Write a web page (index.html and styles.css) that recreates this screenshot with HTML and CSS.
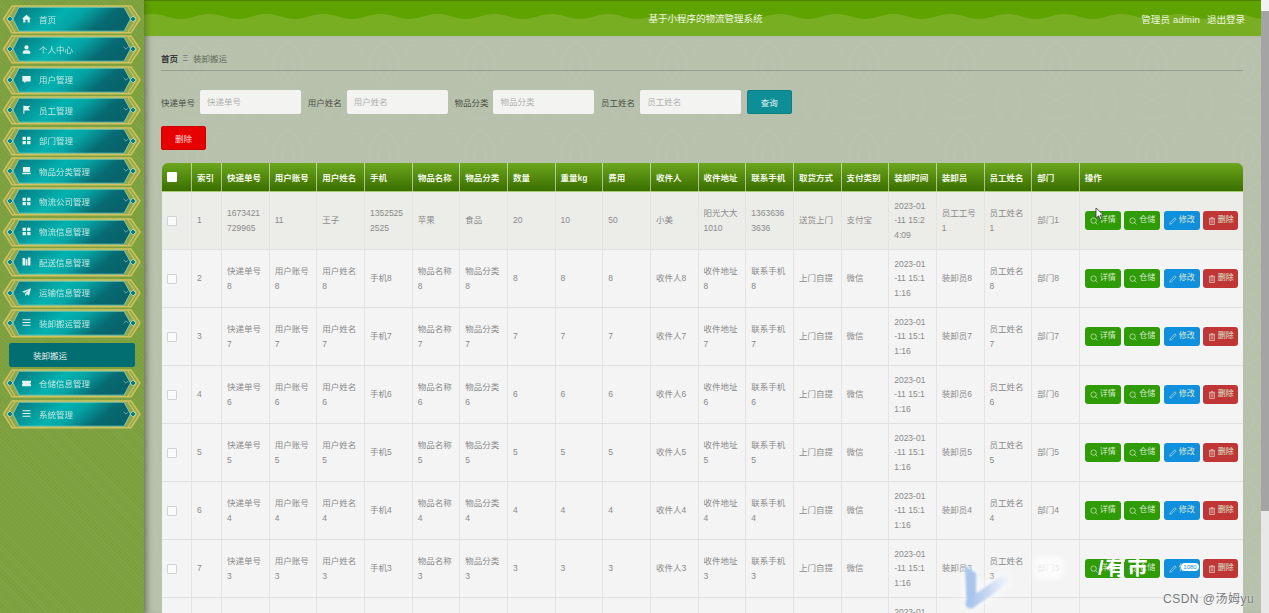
FILE: index.html
```html
<!DOCTYPE html>
<html>
<head>
	<meta charset="utf-8">
	<meta name="viewport" content="width=device-width, initial-scale=1">
	<title>基于小程序的物流管理系统</title>
	<link rel="stylesheet" href="styles.css">
</head>
<body>
<svg class="defs" aria-hidden="true">
	<defs>
		<linearGradient id="teal" x1="0" y1="0" x2="1" y2="0.25">
			<stop offset="0" stop-color="#07757c"/>
			<stop offset="0.16" stop-color="#068a8e"/>
			<stop offset="0.45" stop-color="#02b2b0"/>
			<stop offset="0.62" stop-color="#04a3a4"/>
			<stop offset="0.86" stop-color="#076a72"/>
			<stop offset="1" stop-color="#07646c"/>
		</linearGradient>
		<linearGradient id="wm-fade" x1="0" y1="0" x2="1" y2="0">
			<stop offset="0" stop-color="#a9c5ec"/>
			<stop offset="0.55" stop-color="#c9daf2"/>
			<stop offset="1" stop-color="#eef3fb"/>
		</linearGradient>
		<pattern id="wave-tile" x="-20" y="0" width="57" height="36" patternUnits="userSpaceOnUse">
			<path d="M0 18 C10 18 18 13 28.500 13 S47 18 57 18 V0 H0 Z" fill="#5fa300"/>
		</pattern>
		<symbol id="frame" viewBox="0 0 143 30">
			<path d="M3.500 15 L12 2 H131 L140 15 L131 28.700 H12 Z" fill="#8fa84c" stroke="#d2c360" stroke-width="1.400"/>
			<path d="M7 15 L15 3 M7 15 L15 28 M136.500 15 L128 3 M136.500 15 L128 28" stroke="#d2c360" stroke-width="1.200" fill="none"/>
			<path d="M19 3.200 H124 L130.500 15 L124 27.200 H19 L13 15 Z" fill="url(#teal)" stroke="#8fd3bc" stroke-width="0.800"/>
			<path d="M10 12 L13 15 L10 18 L7 15 Z M133 12 L136 15 L133 18 L130 15 Z" fill="#067f82" stroke="#c6e8c8" stroke-width="0.700"/>
		</symbol>
		<symbol id="i-home" viewBox="0 0 10 10"><path d="M5 .8 L10 5.300 H8.600 V9.400 H6.200 V6.400 H3.800 V9.400 H1.400 V5.300 H0 Z"/></symbol>
		<symbol id="i-user" viewBox="0 0 10 10"><circle cx="5" cy="2.700" r="2.300"/><path d="M.8 9.600 V7.800 C.8 6.400 2.200 5.800 5 5.800 S9.200 6.400 9.200 7.800 V9.600 Z"/></symbol>
		<symbol id="i-chat" viewBox="0 0 10 10"><path d="M.4 1 H9.600 V7.200 H4.600 L2.600 9.200 V7.200 H.4 Z"/></symbol>
		<symbol id="i-flag" viewBox="0 0 10 10"><path d="M1.500 .6 H2.700 V1.200 H9 L7 3.600 L9 6 H2.700 V9.600 H1.500 Z"/></symbol>
		<symbol id="i-grid" viewBox="0 0 10 10"><path d="M.6 .8 H4.300 V4.400 H.6 Z M5.700 .8 H9.400 V4.400 H5.700 Z M.6 5.600 H4.300 V9.200 H.6 Z M5.700 5.600 H9.400 V9.200 H5.700 Z"/></symbol>
		<symbol id="i-box" viewBox="0 0 10 10"><path d="M1 1 H9 V6.800 H1 Z M0 7.400 H10 L9.200 9.200 H.8 Z"/></symbol>
		<symbol id="i-book" viewBox="0 0 10 10"><path d="M.6 1 H3.400 V9.400 H.6 Z M4 2.400 H6 V9.400 H4 Z M6.600 .6 H9.400 V9.400 H6.600 Z"/></symbol>
		<symbol id="i-send" viewBox="0 0 10 10"><path d="M10 .4 L7.800 8.600 L5.200 6.800 L4 9.400 L3.400 6.200 L8 2.400 L2.400 5.400 L0 4.200 Z"/></symbol>
		<symbol id="i-list" viewBox="0 0 10 10"><path d="M.6 1.400 H9.400 V2.600 H.6 Z M.6 4.400 H9.400 V5.600 H.6 Z M.6 7.400 H9.400 V8.600 H.6 Z"/></symbol>
		<symbol id="i-ticket" viewBox="0 0 10 10"><path d="M0 2 H10 V3.800 L9 5 L10 6.200 V8 H0 V6.200 L1 5 L0 3.800 Z"/></symbol>
		<symbol id="i-search" viewBox="0 0 10 10"><circle cx="4.500" cy="4.500" r="3.400" fill="none" stroke="currentColor" stroke-width=".9"/><path d="M7 7 L9.300 9.300" stroke="currentColor" stroke-width=".9"/></symbol>
		<symbol id="i-edit" viewBox="0 0 10 10"><path d="M1 9 L1.600 6.800 L7.400 1 L9 2.600 L3.200 8.400 Z" fill="none" stroke="currentColor" stroke-width=".8"/></symbol>
		<symbol id="i-trash" viewBox="0 0 10 10"><path d="M2 2.600 H8 V9.400 H2 Z M1 1.600 H9 M3.800 .6 H6.200 M4 4 V8 M6 4 V8" fill="none" stroke="currentColor" stroke-width=".8"/></symbol>
		<symbol id="i-down" viewBox="0 0 10 6"><path d="M1 1 L5 5 L9 1" fill="none" stroke="currentColor" stroke-width="1"/></symbol>
		<symbol id="i-up" viewBox="0 0 10 6"><path d="M1 5 L5 1 L9 5" fill="none" stroke="currentColor" stroke-width="1"/></symbol>
	</defs>
</svg>

<aside class="sidebar">
	<a class="menu-item"><svg class="frame"><use href="#frame"/></svg><svg class="ico"><use href="#i-home"/></svg><span>首页</span></a>
	<a class="menu-item"><svg class="frame"><use href="#frame"/></svg><svg class="ico"><use href="#i-user"/></svg><span>个人中心</span><svg class="arrow"><use href="#i-down"/></svg></a>
	<a class="menu-item"><svg class="frame"><use href="#frame"/></svg><svg class="ico"><use href="#i-chat"/></svg><span>用户管理</span><svg class="arrow"><use href="#i-down"/></svg></a>
	<a class="menu-item"><svg class="frame"><use href="#frame"/></svg><svg class="ico"><use href="#i-flag"/></svg><span>员工管理</span><svg class="arrow"><use href="#i-down"/></svg></a>
	<a class="menu-item"><svg class="frame"><use href="#frame"/></svg><svg class="ico"><use href="#i-grid"/></svg><span>部门管理</span><svg class="arrow"><use href="#i-down"/></svg></a>
	<a class="menu-item"><svg class="frame"><use href="#frame"/></svg><svg class="ico"><use href="#i-box"/></svg><span>物品分类管理</span><svg class="arrow"><use href="#i-down"/></svg></a>
	<a class="menu-item"><svg class="frame"><use href="#frame"/></svg><svg class="ico"><use href="#i-grid"/></svg><span>物流公司管理</span><svg class="arrow"><use href="#i-down"/></svg></a>
	<a class="menu-item"><svg class="frame"><use href="#frame"/></svg><svg class="ico"><use href="#i-grid"/></svg><span>物流信息管理</span><svg class="arrow"><use href="#i-down"/></svg></a>
	<a class="menu-item"><svg class="frame"><use href="#frame"/></svg><svg class="ico"><use href="#i-book"/></svg><span>配送信息管理</span><svg class="arrow"><use href="#i-down"/></svg></a>
	<a class="menu-item"><svg class="frame"><use href="#frame"/></svg><svg class="ico"><use href="#i-send"/></svg><span>运输信息管理</span><svg class="arrow"><use href="#i-down"/></svg></a>
	<a class="menu-item"><svg class="frame"><use href="#frame"/></svg><svg class="ico"><use href="#i-list"/></svg><span>装卸搬运管理</span><svg class="arrow"><use href="#i-up"/></svg></a>
	<a class="sub-item">装卸搬运</a>
	<a class="menu-item"><svg class="frame"><use href="#frame"/></svg><svg class="ico"><use href="#i-ticket"/></svg><span>仓储信息管理</span><svg class="arrow"><use href="#i-down"/></svg></a>
	<a class="menu-item"><svg class="frame"><use href="#frame"/></svg><svg class="ico"><use href="#i-list"/></svg><span>系统管理</span><svg class="arrow"><use href="#i-down"/></svg></a>
</aside>

<div class="main">
	<header class="topbar">
		<svg class="wave" aria-hidden="true"><rect width="100%" height="100%" fill="url(#wave-tile)"/></svg>
		<div class="title">基于小程序的物流管理系统</div>
		<div class="user"><span class="who">管理员 admin</span><span>退出登录</span></div>
	</header>

	<div class="content">
		<div class="crumb"><b>首页</b><i>Ξ</i><span>装卸搬运</span></div>

		<form class="search">
			<label>快递单号</label><input placeholder="快递单号">
			<label>用户姓名</label><input placeholder="用户姓名">
			<label>物品分类</label><input placeholder="物品分类">
			<label>员工姓名</label><input placeholder="员工姓名">
			<button type="button" class="btn-query">查询</button>
		</form>

		<button type="button" class="btn-del">删除</button>

		<div class="table-wrap">
			<table class="grid">
				<colgroup>
					<col class="c-check"><col class="c-index">
					<col class="c-data"><col class="c-data"><col class="c-data"><col class="c-data"><col class="c-data"><col class="c-data">
					<col class="c-data"><col class="c-data"><col class="c-data"><col class="c-data"><col class="c-data"><col class="c-data">
					<col class="c-data"><col class="c-data"><col class="c-data"><col class="c-data"><col class="c-data"><col class="c-data">
					<col class="c-action">
				</colgroup>
				<thead>
					<tr>
						<th><input type="checkbox" class="check head"></th><th>索引</th><th>快递单号</th><th>用户账号</th><th>用户姓名</th><th>手机</th><th>物品名称</th><th>物品分类</th><th>数量</th><th>重量kg</th><th>费用</th><th>收件人</th><th>收件地址</th><th>联系手机</th><th>取货方式</th><th>支付类别</th><th>装卸时间</th><th>装卸员</th><th>员工姓名</th><th>部门</th><th>操作</th>
					</tr>
				</thead>
				<tbody>
					<tr class="hover">
						<td><input type="checkbox" class="check"></td><td>1</td><td>1673421729965</td><td>11</td><td>王子</td><td>13525252525</td><td>苹果</td><td>食品</td><td>20</td><td>10</td><td>50</td><td>小美</td><td>阳光大大1010</td><td>13636363636</td><td>送货上门</td><td>支付宝</td><td>2023-01<br>-11 15:2<br>4:09</td><td>员工工号1</td><td>员工姓名1</td><td>部门1</td>
						<td><div class="ops"><a class="op green"><svg><use href="#i-search"/></svg>详情</a><a class="op green"><svg><use href="#i-search"/></svg>仓储</a><a class="op blue"><svg><use href="#i-edit"/></svg>修改</a><a class="op red"><svg><use href="#i-trash"/></svg>删除</a></div></td>
					</tr>
					<tr>
						<td><input type="checkbox" class="check"></td><td>2</td><td>快递单号8</td><td>用户账号8</td><td>用户姓名8</td><td>手机8</td><td>物品名称8</td><td>物品分类8</td><td>8</td><td>8</td><td>8</td><td>收件人8</td><td>收件地址8</td><td>联系手机8</td><td>上门自提</td><td>微信</td><td>2023-01<br>-11 15:1<br>1:16</td><td>装卸员8</td><td>员工姓名8</td><td>部门8</td>
						<td><div class="ops"><a class="op green"><svg><use href="#i-search"/></svg>详情</a><a class="op green"><svg><use href="#i-search"/></svg>仓储</a><a class="op blue"><svg><use href="#i-edit"/></svg>修改</a><a class="op red"><svg><use href="#i-trash"/></svg>删除</a></div></td>
					</tr>
					<tr>
						<td><input type="checkbox" class="check"></td><td>3</td><td>快递单号7</td><td>用户账号7</td><td>用户姓名7</td><td>手机7</td><td>物品名称7</td><td>物品分类7</td><td>7</td><td>7</td><td>7</td><td>收件人7</td><td>收件地址7</td><td>联系手机7</td><td>上门自提</td><td>微信</td><td>2023-01<br>-11 15:1<br>1:16</td><td>装卸员7</td><td>员工姓名7</td><td>部门7</td>
						<td><div class="ops"><a class="op green"><svg><use href="#i-search"/></svg>详情</a><a class="op green"><svg><use href="#i-search"/></svg>仓储</a><a class="op blue"><svg><use href="#i-edit"/></svg>修改</a><a class="op red"><svg><use href="#i-trash"/></svg>删除</a></div></td>
					</tr>
					<tr>
						<td><input type="checkbox" class="check"></td><td>4</td><td>快递单号6</td><td>用户账号6</td><td>用户姓名6</td><td>手机6</td><td>物品名称6</td><td>物品分类6</td><td>6</td><td>6</td><td>6</td><td>收件人6</td><td>收件地址6</td><td>联系手机6</td><td>上门自提</td><td>微信</td><td>2023-01<br>-11 15:1<br>1:16</td><td>装卸员6</td><td>员工姓名6</td><td>部门6</td>
						<td><div class="ops"><a class="op green"><svg><use href="#i-search"/></svg>详情</a><a class="op green"><svg><use href="#i-search"/></svg>仓储</a><a class="op blue"><svg><use href="#i-edit"/></svg>修改</a><a class="op red"><svg><use href="#i-trash"/></svg>删除</a></div></td>
					</tr>
					<tr>
						<td><input type="checkbox" class="check"></td><td>5</td><td>快递单号5</td><td>用户账号5</td><td>用户姓名5</td><td>手机5</td><td>物品名称5</td><td>物品分类5</td><td>5</td><td>5</td><td>5</td><td>收件人5</td><td>收件地址5</td><td>联系手机5</td><td>上门自提</td><td>微信</td><td>2023-01<br>-11 15:1<br>1:16</td><td>装卸员5</td><td>员工姓名5</td><td>部门5</td>
						<td><div class="ops"><a class="op green"><svg><use href="#i-search"/></svg>详情</a><a class="op green"><svg><use href="#i-search"/></svg>仓储</a><a class="op blue"><svg><use href="#i-edit"/></svg>修改</a><a class="op red"><svg><use href="#i-trash"/></svg>删除</a></div></td>
					</tr>
					<tr>
						<td><input type="checkbox" class="check"></td><td>6</td><td>快递单号4</td><td>用户账号4</td><td>用户姓名4</td><td>手机4</td><td>物品名称4</td><td>物品分类4</td><td>4</td><td>4</td><td>4</td><td>收件人4</td><td>收件地址4</td><td>联系手机4</td><td>上门自提</td><td>微信</td><td>2023-01<br>-11 15:1<br>1:16</td><td>装卸员4</td><td>员工姓名4</td><td>部门4</td>
						<td><div class="ops"><a class="op green"><svg><use href="#i-search"/></svg>详情</a><a class="op green"><svg><use href="#i-search"/></svg>仓储</a><a class="op blue"><svg><use href="#i-edit"/></svg>修改</a><a class="op red"><svg><use href="#i-trash"/></svg>删除</a></div></td>
					</tr>
					<tr>
						<td><input type="checkbox" class="check"></td><td>7</td><td>快递单号3</td><td>用户账号3</td><td>用户姓名3</td><td>手机3</td><td>物品名称3</td><td>物品分类3</td><td>3</td><td>3</td><td>3</td><td>收件人3</td><td>收件地址3</td><td>联系手机3</td><td>上门自提</td><td>微信</td><td>2023-01<br>-11 15:1<br>1:16</td><td>装卸员3</td><td>员工姓名3</td><td>部门3</td>
						<td><div class="ops"><a class="op green"><svg><use href="#i-search"/></svg>详情</a><a class="op green"><svg><use href="#i-search"/></svg>仓储</a><a class="op blue"><svg><use href="#i-edit"/></svg>修改</a><a class="op red"><svg><use href="#i-trash"/></svg>删除</a></div></td>
					</tr>
					<tr>
						<td><input type="checkbox" class="check"></td><td>8</td><td>快递单号2</td><td>用户账号2</td><td>用户姓名2</td><td>手机2</td><td>物品名称2</td><td>物品分类2</td><td>2</td><td>2</td><td>2</td><td>收件人2</td><td>收件地址2</td><td>联系手机2</td><td>上门自提</td><td>微信</td><td>2023-01<br>-11 15:1<br>1:16</td><td>装卸员2</td><td>员工姓名2</td><td>部门2</td>
						<td><div class="ops"><a class="op green"><svg><use href="#i-search"/></svg>详情</a><a class="op green"><svg><use href="#i-search"/></svg>仓储</a><a class="op blue"><svg><use href="#i-edit"/></svg>修改</a><a class="op red"><svg><use href="#i-trash"/></svg>删除</a></div></td>
					</tr>
				</tbody>
			</table>
		</div>
	</div>
</div>

<div class="scrollbar"><span class="sb-btn"></span><span class="sb-thumb"></span></div>

<!-- things lying over the page: mouse pointer and the video watermark -->
<svg class="cursor" viewBox="0 0 10 14" aria-hidden="true"><path d="M1 1 V11 L3.500 8.800 L5.500 13 L7 12.300 L5.200 8.200 L8.500 8 Z" fill="#fff" stroke="#333" stroke-width=".8"/></svg>
<div class="wm-patch"></div>
<svg class="wm-logo" viewBox="0 0 50 50" aria-hidden="true">
	<path d="M2 3 L14 11 V38 L4 47 Z" fill="#a9c5ec"/>
	<path d="M8 43 L44 18" stroke="url(#wm-fade)" stroke-width="11" stroke-linecap="round" fill="none"/>
</svg>
<div class="wm-brand">/有市</div>
<div class="wm-badge">1080</div>
<div class="wm-text">CSDN @汤姆yu</div>
</body>
</html>
```
FILE: styles.css
```css
*
{
	margin: 0;
	padding: 0;
	box-sizing: border-box;
}
html, body
{
	height: 100%;
	overflow: hidden;
}
body
{
	position: relative;
	display: flex;
	font-family: "Liberation Sans", "Noto Sans CJK SC", sans-serif;
	font-size: 8.5px;
	background: #b7c1ac;
	filter: blur(0.35px);
}
.defs
{
	position: absolute;
	width: 0;
	height: 0;
}

/* sidebar */
.sidebar
{
	flex: 0 0 144px;
	display: flex;
	flex-direction: column;
	padding-top: 4px;
	background-color: #7ca03e;
	background-image: repeating-linear-gradient(45deg, rgba(255,255,255,0.04) 0 1px, transparent 1px 3px);
	box-shadow: 2px 0 6px rgba(60,70,40,0.45);
	z-index: 2;
}
.menu-item
{
	position: relative;
	display: flex;
	align-items: center;
	flex: 0 0 30.4px;
	padding: 0 0 1px 22px;
	color: #c4e6e0;
}
.menu-item .frame
{
	position: absolute;
	left: 0;
	top: 0;
	width: 143px;
	height: 30px;
}
.menu-item .ico
{
	position: relative;
	width: 9px;
	height: 9px;
	margin-right: 8px;
	fill: #e4f3ee;
}
.menu-item span
{
	position: relative;
	font-size: 8.5px;
}
.menu-item .arrow
{
	position: absolute;
	right: 15px;
	top: 12px;
	width: 6px;
	height: 4px;
	color: #a8d8d0;
}
.sub-item
{
	display: flex;
	align-items: center;
	height: 24px;
	margin: 4.500px 9px 1.700px;
	padding-left: 24px;
	background: #036e72;
	border-radius: 2px;
	color: #e4f3ee;
	font-size: 8.500px;
}

/* top bar */
.main
{
	flex: 1;
	min-width: 0;
	display: flex;
	flex-direction: column;
}
.topbar
{
	position: relative;
	flex: 0 0 36px;
	display: flex;
	align-items: center;
	justify-content: center;
	padding: 0 0 1px 6px;
	background: #78af22;
	border-top: 1px solid #4f8200;
	color: #f1f7e2;
}
.topbar .wave
{
	position: absolute;
	left: 0;
	top: 0;
	width: 100%;
	height: 100%;
}
.topbar .title
{
	position: relative;
	font-size: 9.500px;
}
.topbar .user
{
	position: absolute;
	right: 16px;
	top: 11px;
	display: flex;
	gap: 7px;
	font-size: 9.500px;
}
.topbar .who
{
	letter-spacing: 0.200px;
}

/* content */
.content
{
	flex: 1;
	min-height: 0;
	padding: 0 18px 0 17px;
	background-color: #b7c1ac;
	background-image: url("data:image/svg+xml,%3Csvg xmlns='http://www.w3.org/2000/svg' width='96' height='88'%3E%3Cg fill='none' stroke='%23fff' stroke-opacity='.03' stroke-width='1.500'%3E%3Cpath d='M48 6c16 10 22 28 0 48c-22-20-16-38 0-48z'/%3E%3Cpath d='M48 18c7 6 9 16 0 25c-9-9-7-19 0-25z'/%3E%3Cpath d='M0 50c16 6 19 24 0 38M96 50c-16 6-19 24 0 38'/%3E%3Cpath d='M22 66c6-10 19-10 26 0c7-10 20-10 26 0'/%3E%3Cpath d='M12 10c9-4 16 2 15 10M84 10c-9-4-16 2-15 10'/%3E%3Cpath d='M30 78c6 6 30 6 36 0'/%3E%3C/g%3E%3C/svg%3E");
	box-shadow: inset 6px 0 6px -4px rgba(70,80,50,0.35);
}
.crumb
{
	display: flex;
	align-items: center;
	height: 35px;
	padding-top: 9px;
	border-bottom: 1px solid #979e90;
	font-size: 8.500px;
	color: #60665a;
}
.crumb b
{
	color: #3a3a3a;
}
.crumb i
{
	margin: 0 5px 0 4.500px;
	font-style: normal;
	color: #777;
}
.search
{
	display: flex;
	align-items: center;
	margin-top: 19px;
}
.search label
{
	margin-right: 5px;
	color: #4a4f44;
}
.search input
{
	width: 101px;
	height: 24px;
	margin-right: 6.700px;
	padding-left: 7px;
	border: none;
	border-radius: 2px;
	outline: none;
	background: #f3f4f2;
	font: inherit;
}
.search input::placeholder
{
	color: #aeb0ac;
}
.btn-query
{
	width: 45px;
	height: 24px;
	margin-left: -1px;
	border: 1px solid #0c7f86;
	border-radius: 2px;
	background: #0e8f97;
	color: #e8f6f4;
	font: inherit;
}
.btn-del
{
	display: block;
	width: 45px;
	height: 24px;
	margin-top: 12px;
	border: 1px solid #c90000;
	border-radius: 2px;
	background: #e60000;
	color: #f6dede;
	font: inherit;
}

/* table */
.table-wrap
{
	margin: 13px 0 0 1px;
}
.grid
{
	table-layout: fixed;
	width: 1081px;
	border-collapse: separate;
	border-spacing: 0;
}
.c-check { width: 29px; }
.c-index { width: 30px; }
.c-data { width: 47.670px; }
.c-action { width: 164px; }
.grid th
{
	height: 29px;
	padding: 0 2px 0 5px;
	background: linear-gradient(180deg, #6ca71d, #3a6d00);
	border-left: 1px solid rgba(255,255,255,0.55);
	border-bottom: 1px solid #a5cc72;
	color: #f2f7e6;
	font-weight: bold;
	text-align: left;
	white-space: nowrap;
}
.grid th:first-child
{
	border-left: none;
	border-top-left-radius: 6px;
}
.grid th:last-child
{
	border-top-right-radius: 6px;
}
.grid td
{
	height: 58px;
	padding: 0 6px 0 5px;
	background: #f4f4f4;
	border-left: 1px solid #e4e4e4;
	border-bottom: 1px solid #e0e0e0;
	color: #8a8a8a;
	line-height: 14.500px;
	word-break: break-all;
}
.grid td:first-child
{
	border-left: none;
}
.grid .hover td
{
	background: #ecede8;
}
.check
{
	appearance: none;
	display: block;
	width: 10px;
	height: 10px;
	border: 1px solid #d2d2d2;
	border-radius: 1px;
	background: #fafafa;
}
.check.head
{
	border: none;
	background: #fff;
}

.ops
{
	display: flex;
	gap: 3.500px;
}
.op
{
	display: flex;
	align-items: center;
	justify-content: center;
	gap: 2px;
	flex: 0 0 36px;
	height: 19px;
	border-radius: 3px;
	color: #d8e8cf;
	font-size: 8px;
	white-space: nowrap;
}
.op svg
{
	width: 8px;
	height: 8px;
}
.op.green { background: #2f9b06; }
.op.blue { background: #0f8fdc; }
.op.red { background: #c03636; flex-basis: 35px; }

/* scrollbar */
.scrollbar
{
	flex: 0 0 8px;
	display: flex;
	flex-direction: column;
	background: #e8e8e8;
	position: relative;
	z-index: 3;
}
.sb-btn
{
	height: 11px;
	background: #f2f2f2;
}
.sb-thumb
{
	height: 500px;
	background: #a4a4a4;
}

/* overlays */
.cursor
{
	position: absolute;
	left: 1095px;
	top: 207px;
	width: 10px;
	height: 14px;
	z-index: 5;
}
.wm-patch
{
	position: absolute;
	left: 1034px;
	top: 558px;
	width: 30px;
	height: 20px;
	background: rgba(255,255,255,0.8);
	filter: blur(3px);
	z-index: 5;
}
.wm-logo
{
	position: absolute;
	left: 963px;
	top: 563px;
	width: 47px;
	height: 47px;
	filter: blur(1px) drop-shadow(0 0 5px #fff);
	z-index: 5;
}
.wm-brand
{
	position: absolute;
	left: 1098px;
	top: 556px;
	font-size: 20px;
	line-height: 24px;
	font-weight: bold;
	letter-spacing: 2px;
	white-space: nowrap;
	color: #fff;
	z-index: 5;
}
.wm-badge
{
	position: absolute;
	left: 1181px;
	top: 563px;
	width: 18px;
	height: 8px;
	border-radius: 4px;
	background: #fff;
	color: #0f8fdc;
	font-size: 6px;
	line-height: 8px;
	text-align: center;
	z-index: 5;
}
.wm-text
{
	position: absolute;
	left: 1163px;
	top: 589px;
	font-size: 12px;
	letter-spacing: 0.500px;
	color: #77797c;
	text-shadow: 0 0 2px #fff;
	z-index: 5;
	white-space: nowrap;
}
```
